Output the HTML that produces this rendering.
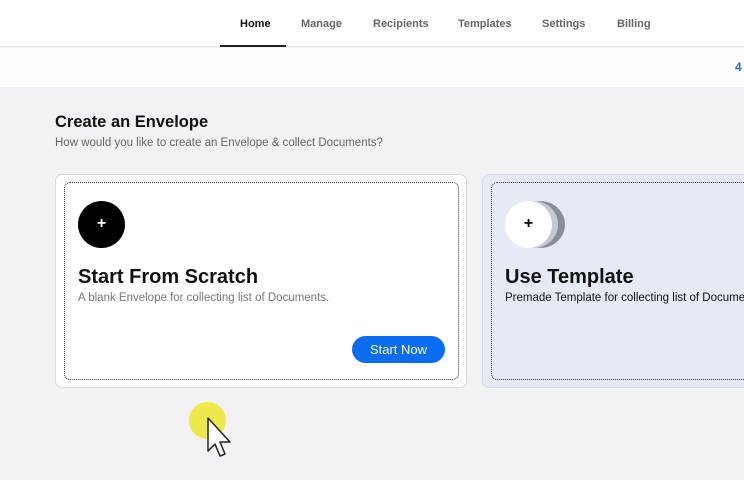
<!DOCTYPE html>
<html><head><style>
*{margin:0;padding:0;box-sizing:border-box}
body{width:744px;height:480px;overflow:hidden;background:#f2f2f4;font-family:"Liberation Sans",sans-serif;position:relative}
.hdr{position:absolute;left:0;top:0;width:744px;height:47px;background:#fff;border-bottom:1px solid #e8e8ec}
.nav{position:absolute;top:18px;font-size:11px;font-weight:bold;color:#666}
.sub{position:absolute;left:0;top:48px;width:744px;height:39px;background:#fdfdfd}
.card{position:absolute;top:174px;height:214px;border:1px solid #d9dbe0;border-radius:7px}
.inner{position:absolute;left:8px;top:7px;right:7px;bottom:7px;border:1px dotted #333;border-radius:6px}
.t{position:absolute;font-size:20px;font-weight:bold;color:#111}
.s{position:absolute;font-size:11.5px}
</style></head><body>
<div class="hdr">
<div class="nav" style="left:240px;color:#111">Home</div>
<div style="position:absolute;left:220px;top:45px;width:66px;height:2px;background:#222"></div>
<div class="nav" style="left:301px">Manage</div>
<div class="nav" style="left:373px">Recipients</div>
<div class="nav" style="left:458px">Templates</div>
<div class="nav" style="left:542px">Settings</div>
<div class="nav" style="left:617px">Billing</div>
</div>
<div class="sub"><div style="position:absolute;left:735px;top:12px;color:#1a6cf0;font-weight:bold;font-size:12px">4</div></div>
<div style="position:absolute;left:55px;top:113px;font-size:16.5px;font-weight:bold;color:#111">Create an Envelope</div>
<div style="position:absolute;left:55px;top:137px;font-size:11.5px;color:#666">How would you like to create an Envelope &amp; collect Documents?</div>

<div class="card" style="left:55px;width:412px;background:#fff">
<div class="inner"></div>
<div style="position:absolute;left:22px;top:26px;width:47px;height:47px;border-radius:50%;background:#000;color:#fff;text-align:center;line-height:46px;font-size:16px;font-weight:bold">+</div>
<div class="t" style="left:22px;top:91px">Start From Scratch</div>
<div class="s" style="left:22px;top:117px;color:#777">A blank Envelope for collecting list of Documents.</div>
<div style="position:absolute;left:296px;top:161px;width:93px;height:27px;border-radius:14px;background:#0a6cf0;color:#fff;font-size:13px;text-align:center;line-height:27px">Start Now</div>
</div>

<div class="card" style="left:482px;width:280px;background:#e5eaf5">
<div class="inner"></div>
<div style="position:absolute;left:32px;top:26px;width:50px;height:47px;border-radius:50%;background:#8a8e9a"></div>
<div style="position:absolute;left:27px;top:26px;width:48px;height:47px;border-radius:50%;background:#c5c8d2"></div>
<div style="position:absolute;left:22px;top:26px;width:47px;height:47px;border-radius:50%;background:#fff;color:#000;text-align:center;line-height:46px;font-size:16px;font-weight:bold">+</div>
<div class="t" style="left:22px;top:91px">Use Template</div>
<div class="s" style="left:22px;top:117px;color:#111;white-space:nowrap">Premade Template for collecting list of Documents.</div>
</div>

<div style="position:absolute;left:189px;top:402px;width:37px;height:37px;border-radius:50%;background:#eee94a"></div>
<svg style="position:absolute;left:206px;top:417px" width="26" height="42" viewBox="0 0 26 42"><path d="M2 1 L2 34 L9 27 L14 39 L19 37 L14 25 L24 25 Z" fill="#fff" stroke="#222" stroke-width="1.5" stroke-linejoin="round"/></svg>
</body></html>
